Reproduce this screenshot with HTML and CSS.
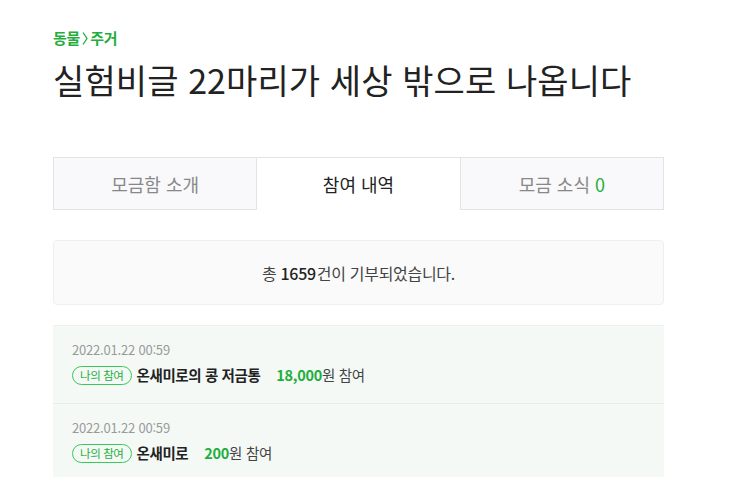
FILE: index.html
```html
<!DOCTYPE html>
<html lang="ko">
<head>
<meta charset="utf-8">
<link rel="stylesheet" href="styles.css">
</head>
<body>
<div class="page">
  <div class="category">동물<svg class="arrow" width="8" height="15" viewBox="0 0 8 15" aria-hidden="true"><path d="M2 1.5 L6 7.5 L2 13.5" fill="none" stroke="#1fae3d" stroke-width="1.3"/></svg>주거</div>
  <h1 class="title">실험비글 22마리가 세상 밖으로 나옵니다</h1>
  <div class="tabs">
    <div class="tab">모금함 소개</div>
    <div class="tab active">참여 내역</div>
    <div class="tab">모금 소식 <span class="count">0</span></div>
  </div>
  <div class="summary">총 <b>1659</b>건이 기부되었습니다.</div>
  <ul class="list">
    <li class="item">
      <div class="date">2022.01.22 00:59</div>
      <div class="line"><span class="badge">나의 참여</span><span class="name">온새미로의 콩 저금통</span><span class="amount"><b>18,000</b>원 참여</span></div>
    </li>
    <li class="item">
      <div class="date">2022.01.22 00:59</div>
      <div class="line"><span class="badge">나의 참여</span><span class="name">온새미로</span><span class="amount"><b>200</b>원 참여</span></div>
    </li>
  </ul>
</div>
</body>
</html>
```

FILE: styles.css
```css
* { box-sizing: border-box; }
html, body { margin: 0; padding: 0; background: #fff; }
body {
  font-family: "Noto Sans CJK KR", "Noto Sans", sans-serif;
  color: #222;
}
.page {
  width: 611px;
  margin-left: 53px;
  padding-top: 28px;
}
.category {
  display: flex;
  align-items: center;
  font-size: 15px;
  font-weight: 700;
  color: #1fae3d;
  line-height: 20px;
  letter-spacing: -0.2px;
}
.arrow {
  display: block;
  margin: 0 1px 0 1px;
}
.title {
  margin: 9px 0 0;
  font-size: 34px;
  font-weight: 400;
  line-height: 46px;
  letter-spacing: 0.1px;
  color: #222;
}
.tabs {
  display: flex;
  margin-top: 54px;
  height: 53px;
}
.tab {
  flex: 1;
  display: flex;
  align-items: center;
  justify-content: center;
  font-size: 18px;
  color: #888;
  background: #f9f9fb;
  border: 1px solid #e3e3e3;
}
.tab + .tab { border-left: none; }
.tab.active {
  background: #fff;
  color: #222;
  border-bottom: none;
}
.count { color: #1fae3d; margin-left: 5px; }
.summary {
  margin-top: 30px;
  height: 65px;
  background: #fafafa;
  border: 1px solid #efefef;
  border-radius: 4px;
  display: flex;
  align-items: center;
  justify-content: center;
  font-size: 16px;
  color: #444;
  letter-spacing: -0.3px;
}
.summary b { font-weight: 500; color: #222; margin: 0 1px 0 4px; }
.list {
  list-style: none;
  margin: 20px 0 0;
  padding: 0;
  background: #f4f9f6;
}
.item {
  padding: 15px 19px 18px;
  border-top: 1px solid #eef1ef;
}
.item + .item { border-top: 1px solid #e6ece8; }
.date {
  font-size: 13px;
  color: #999;
  line-height: 18px;
  letter-spacing: -0.2px;
}
.line {
  display: flex;
  align-items: center;
  margin-top: 6px;
  line-height: 20px;
}
.badge {
  font-size: 11.5px;
  color: #1fae3d;
  border: 1px solid #38c95a;
  border-radius: 10px;
  padding: 0 7px;
  height: 19px;
  display: inline-flex;
  align-items: center;
  margin-right: 5px;
  letter-spacing: -0.4px;
}
.name {
  font-size: 14.5px;
  font-weight: 700;
  color: #222;
  letter-spacing: -0.4px;
}
.amount {
  margin-left: 16px;
  font-size: 14.5px;
  color: #444;
  letter-spacing: -0.3px;
}
.amount b { color: #1fae3d; font-weight: 700; }
```
